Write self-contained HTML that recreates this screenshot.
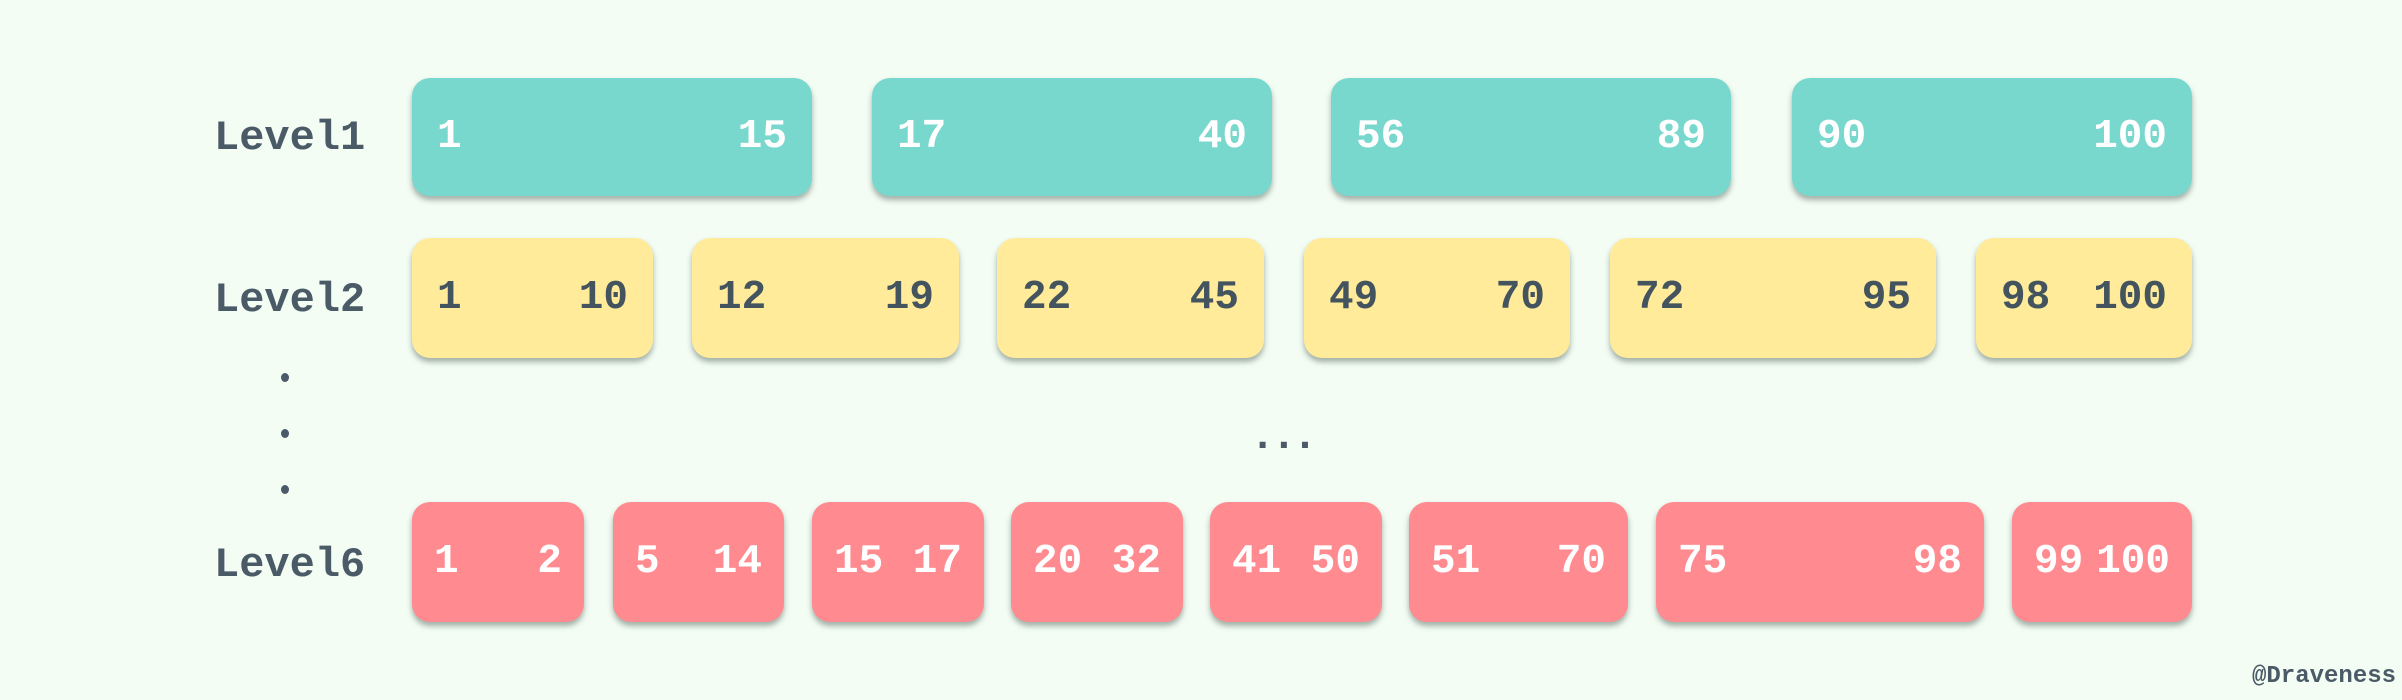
<!DOCTYPE html>
<html><head><meta charset="utf-8"><style>
html,body{margin:0;padding:0}
body{width:2402px;height:700px;background:#f3fdf4;position:relative;overflow:hidden;font-family:"Liberation Mono","DejaVu Sans Mono",monospace;}
.b{position:absolute;border-radius:18px;box-shadow:0 4px 6px rgba(60,80,70,0.45);display:flex;justify-content:space-between;align-items:center;padding:0 25px;box-sizing:border-box;font-size:41px;font-weight:bold;}
.t{background:#79d8ce;color:#fff;top:78px;height:118px}
.y{background:#ffeb99;color:#44545f;top:238px;height:120px}
.r{background:#ff8a8f;color:#fff;top:502px;height:120px;padding:0 22px}
.l{position:absolute;left:214px;font-size:42px;font-weight:bold;color:#4a5a66;line-height:1}
.d{position:absolute;left:281px;width:8px;height:9px;border-radius:50%;background:#4a5a66}
</style></head><body>
<div class="l" style="top:117px">Level1</div>
<div class="l" style="top:279px">Level2</div>
<div class="l" style="top:544px">Level6</div>
<div class="d" style="top:373px"></div>
<div class="d" style="top:429px"></div>
<div class="d" style="top:485px"></div>
<div style="position:absolute;left:1250px;top:413px;font-size:42px;font-weight:bold;color:#4a5a66;letter-spacing:-4px">...</div>

<div class="b t" style="left:412px;width:400px"><span>1</span><span>15</span></div>
<div class="b t" style="left:872px;width:400px"><span>17</span><span>40</span></div>
<div class="b t" style="left:1331px;width:400px"><span>56</span><span>89</span></div>
<div class="b t" style="left:1792px;width:400px"><span>90</span><span>100</span></div>

<div class="b y" style="left:412px;width:241px"><span>1</span><span>10</span></div>
<div class="b y" style="left:692px;width:267px"><span>12</span><span>19</span></div>
<div class="b y" style="left:997px;width:267px"><span>22</span><span>45</span></div>
<div class="b y" style="left:1304px;width:266px"><span>49</span><span>70</span></div>
<div class="b y" style="left:1610px;width:326px"><span>72</span><span>95</span></div>
<div class="b y" style="left:1976px;width:216px"><span>98</span><span>100</span></div>

<div class="b r" style="left:412px;width:172px"><span>1</span><span>2</span></div>
<div class="b r" style="left:613px;width:171px"><span>5</span><span>14</span></div>
<div class="b r" style="left:812px;width:172px"><span>15</span><span>17</span></div>
<div class="b r" style="left:1011px;width:172px"><span>20</span><span>32</span></div>
<div class="b r" style="left:1210px;width:172px"><span>41</span><span>50</span></div>
<div class="b r" style="left:1409px;width:219px"><span>51</span><span>70</span></div>
<div class="b r" style="left:1656px;width:328px"><span>75</span><span>98</span></div>
<div class="b r" style="left:2012px;width:180px"><span>99</span><span>100</span></div>

<div style="position:absolute;left:2252px;top:665px;font-size:24px;font-weight:bold;color:#4a5a66;line-height:1">@Draveness</div>
</body></html>
